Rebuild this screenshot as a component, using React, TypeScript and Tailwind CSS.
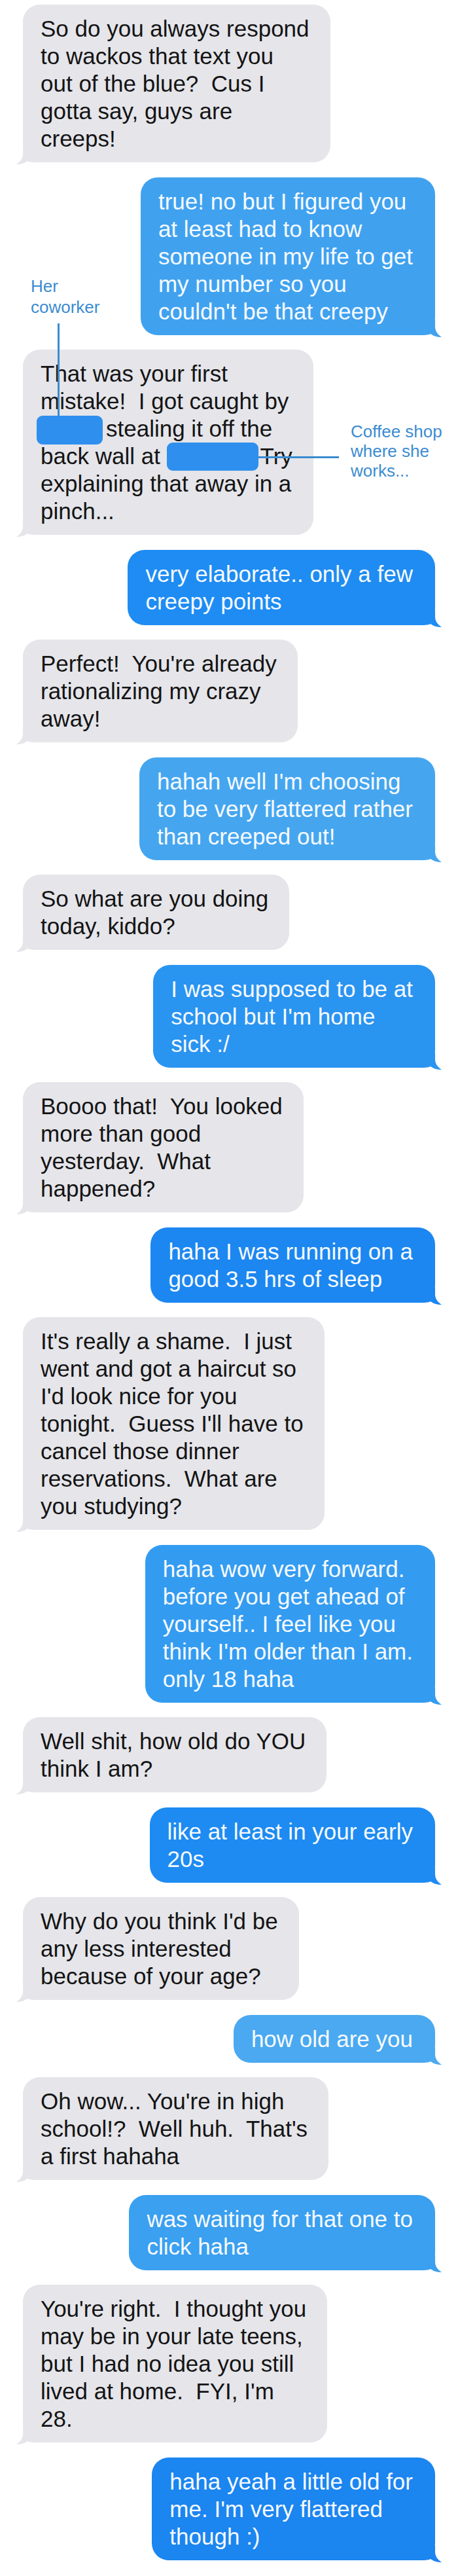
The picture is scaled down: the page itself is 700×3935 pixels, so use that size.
import clsx from 'clsx'
import type { ReactNode } from 'react'

type Side = 'her' | 'me'

type Message = {
  from: Side
  lines: string[]
  bg: string
  fill: string
}

const gray = { bg: 'bg-[#e5e5ea]', fill: 'text-[#e5e5ea]' }

const her = (lines: string[]): Message => ({ from: 'her', lines, ...gray })
const me = (lines: string[], bg: string, fill: string): Message => ({ from: 'me', lines, bg, fill })

// everything after the annotated part of the thread
const thread: Message[] = [
  me(['very elaborate.. only a few', 'creepy points'], 'bg-[#1e8cf2]', 'text-[#1e8cf2]'),
  her(['Perfect!  You\'re already', 'rationalizing my crazy', 'away!']),
  me(['hahah well I\'m choosing', 'to be very flattered rather', 'than creeped out!'], 'bg-[#45a6ef]', 'text-[#45a6ef]'),
  her(['So what are you doing', 'today, kiddo?']),
  me(['I was supposed to be at', 'school but I\'m home', 'sick :/'], 'bg-[#2a94f1]', 'text-[#2a94f1]'),
  her(['Boooo that!  You looked', 'more than good', 'yesterday.  What', 'happened?']),
  me(['haha I was running on a', 'good 3.5 hrs of sleep'], 'bg-[#1c87f0]', 'text-[#1c87f0]'),
  her([
    'It\'s really a shame.  I just',
    'went and got a haircut so',
    'I\'d look nice for you',
    'tonight.  Guess I\'ll have to',
    'cancel those dinner',
    'reservations.  What are',
    'you studying?',
  ]),
  me(
    [
      'haha wow very forward.',
      'before you get ahead of',
      'yourself.. I feel like you',
      'think I\'m older than I am.',
      'only 18 haha',
    ],
    'bg-[#339cf1]',
    'text-[#339cf1]',
  ),
  her(['Well shit, how old do YOU', 'think I am?']),
  me(['like at least in your early', '20s'], 'bg-[#1d8bf1]', 'text-[#1d8bf1]'),
  her(['Why do you think I\'d be', 'any less interested', 'because of your age?']),
  me(['how old are you'], 'bg-[#4aa9f0]', 'text-[#4aa9f0]'),
  her(['Oh wow... You\'re in high', 'school!?  Well huh.  That\'s', 'a first hahaha']),
  me(['was waiting for that one to', 'click haha'], 'bg-[#3aa0ef]', 'text-[#3aa0ef]'),
  her([
    'You\'re right.  I thought you',
    'may be in your late teens,',
    'but I had no idea you still',
    'lived at home.  FYI, I\'m',
    '28.',
  ]),
  me(['haha yeah a little old for', 'me. I\'m very flattered', 'though :)'], 'bg-[#1b85f0]', 'text-[#1b85f0]'),
]

function Tail({ from, fill }: { from: Side; fill: string }) {
  if (from === 'her') {
    return (
      <svg
        className={clsx('absolute -bottom-[3px] -left-[10px] h-[26px] w-[36px]', fill)}
        viewBox="0 0 36 26"
        aria-hidden
      >
        <path d="M10 0 L10 10 C10 17 6 22 0 26 C7 26 13 24 17 21 C21 23 27 23 36 23 L36 0 Z" fill="currentColor" />
      </svg>
    )
  }
  return (
    <svg
      className={clsx('absolute -right-[10px] -bottom-[3px] h-[26px] w-[36px]', fill)}
      viewBox="0 0 36 26"
      aria-hidden
    >
      <path d="M26 0 L26 10 C26 17 30 22 36 26 C29 26 23 24 19 21 C15 23 9 23 0 23 L0 0 Z" fill="currentColor" />
    </svg>
  )
}

function Bubble({ from, bg, fill, children }: { from: Side; bg: string; fill: string; children: ReactNode }) {
  return (
    <div
      className={clsx(
        'relative rounded-[26px] pt-[16px] pb-[15px] pl-[27px] text-[35px] leading-[42px]',
        bg,
        from === 'me' ? 'pr-[34px] text-[#f7faff]' : 'pr-[32px] text-[#141414]',
      )}
    >
      <div className="relative z-10">{children}</div>
      <Tail from={from} fill={fill} />
    </div>
  )
}

function Lines({ lines }: { lines: string[] }) {
  return (
    <>
      {lines.map((line, i) => (
        <div key={i} className="whitespace-pre">
          {line}
        </div>
      ))}
    </>
  )
}

export default function App() {
  return (
    <div className="min-h-screen bg-white font-['Liberation_Sans',Arial,sans-serif] antialiased">
      <div className="flex flex-col gap-[22.5px] px-[35px] pt-[7px] pb-[25px]">
        <div className="self-start">
          <Bubble from="her" {...gray}>
            <Lines
              lines={[
                'So do you always respond',
                'to wackos that text you',
                'out of the blue?  Cus I',
                'gotta say, guys are',
                'creeps!',
              ]}
            />
          </Bubble>
        </div>

        <div className="flex items-end justify-between">
          <div className="mb-[27px] ml-[12px] text-[26px] leading-[32px] text-[#3b8cd0]">
            <div>Her</div>
            <div>coworker</div>
          </div>
          <Bubble from="me" bg="bg-[#40a2ef]" fill="text-[#40a2ef]">
            <Lines
              lines={[
                'true! no but I figured you',
                'at least had to know',
                'someone in my life to get',
                'my number so you',
                'couldn\'t be that creepy',
              ]}
            />
          </Bubble>
        </div>

        <div className="relative flex">
          <Bubble from="her" {...gray}>
            <div className="whitespace-pre">That was your first</div>
            <div className="whitespace-pre">mistake!  I got caught by</div>
            <div className="whitespace-pre">
              <span className="relative -mb-[2px] -ml-[6px] mr-[5px] inline-block h-[44px] w-[101px] translate-y-[1px] rounded-[9px] bg-[#2e8fee] align-top">
                <span className="absolute bottom-full left-[32px] h-[141px] w-[3px] bg-[#3b8cd0]" />
              </span>
              stealing it off the
            </div>
            <div className="whitespace-pre">
              back wall at{' '}
              <span className="relative -mb-[1px] mr-[3px] inline-block h-[43px] w-[140px] rounded-[9px] bg-[#2e8fee] align-top">
                <span className="absolute top-[21px] left-full h-[3px] w-[123px] bg-[#3b8cd0]" />
              </span>
              Try
            </div>
            <div className="whitespace-pre">explaining that away in a</div>
            <div className="whitespace-pre">pinch...</div>
          </Bubble>
          <div className="absolute top-[110px] left-[501px] whitespace-nowrap text-[26px] leading-[30px] text-[#3b8cd0]">
            <div>Coffee shop</div>
            <div>where she</div>
            <div>works...</div>
          </div>
        </div>

        {thread.map((m, i) => (
          <div key={i} className={m.from === 'me' ? 'self-end' : 'self-start'}>
            <Bubble from={m.from} bg={m.bg} fill={m.fill}>
              <Lines lines={m.lines} />
            </Bubble>
          </div>
        ))}
      </div>
    </div>
  )
}
